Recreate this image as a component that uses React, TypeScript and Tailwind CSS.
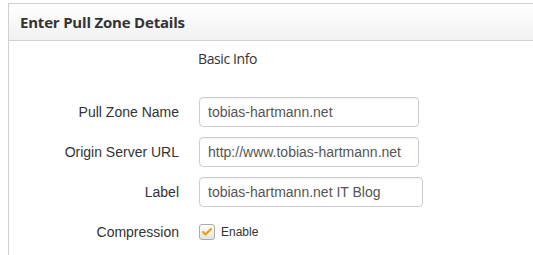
import { Check } from "lucide-react";

const rows = [
  { label: "Pull Zone Name", value: "tobias-hartmann.net", w: "w-[220px]" },
  { label: "Origin Server URL", value: "http://www.tobias-hartmann.net", w: "w-[220px]" },
  { label: "Label", value: "tobias-hartmann.net IT Blog", w: "w-[224px]" },
];

export default function App() {
  return (
    <div className="w-[533px] h-[255px] overflow-hidden bg-white pl-2 pt-[3px]">
      <div className="w-[600px] h-[300px] border-l border-t border-[#d0d0d0] bg-white">
        <div className="h-[37px] border-b border-[#d0d0d0] bg-gradient-to-b from-white to-[#f1f1f1] flex items-center pl-[11px]">
          <h1 className="font-['Open_Sans',sans-serif] font-bold text-[15px] text-[#333] tracking-[-0.2px]">
            Enter Pull Zone Details
          </h1>
        </div>

        <div className="pt-[8px]">
          <div className="pl-[189px] mb-[28px] font-['Open_Sans',sans-serif] text-[14px] leading-[20px] text-[#333] tracking-[-0.4px]">
            Basic Info
          </div>

          <div className="flex flex-col gap-[10px] font-['Liberation_Sans',Arial,sans-serif]">
            {rows.map((r) => (
              <div key={r.label} className="flex items-center h-[30px]">
                <label className="w-[170px] text-right text-[14px] text-[#333]">{r.label}</label>
                <div
                  className={`ml-[20px] ${r.w} h-[30px] border border-[#cccccc] rounded-[4px] px-[8px] flex items-center text-[14px] text-[#555] shadow-[inset_0_1px_1px_rgba(0,0,0,0.05)]`}
                >
                  {r.value}
                </div>
              </div>
            ))}

            <div className="flex items-center h-[30px]">
              <label className="w-[170px] text-right text-[14px] text-[#333]">Compression</label>
              <div className="ml-[20px] flex items-center gap-[6px]">
                <span className="w-[16px] h-[16px] rounded-[3px] border border-[#a9a9a9] bg-gradient-to-b from-white to-[#e4e4e4] flex items-center justify-center">
                  <Check className="w-[12px] h-[12px] text-[#f39c12]" strokeWidth={4.5} />
                </span>
                <span className="text-[12px] text-[#333]">Enable</span>
              </div>
            </div>
          </div>
        </div>
      </div>
    </div>
  );
}
